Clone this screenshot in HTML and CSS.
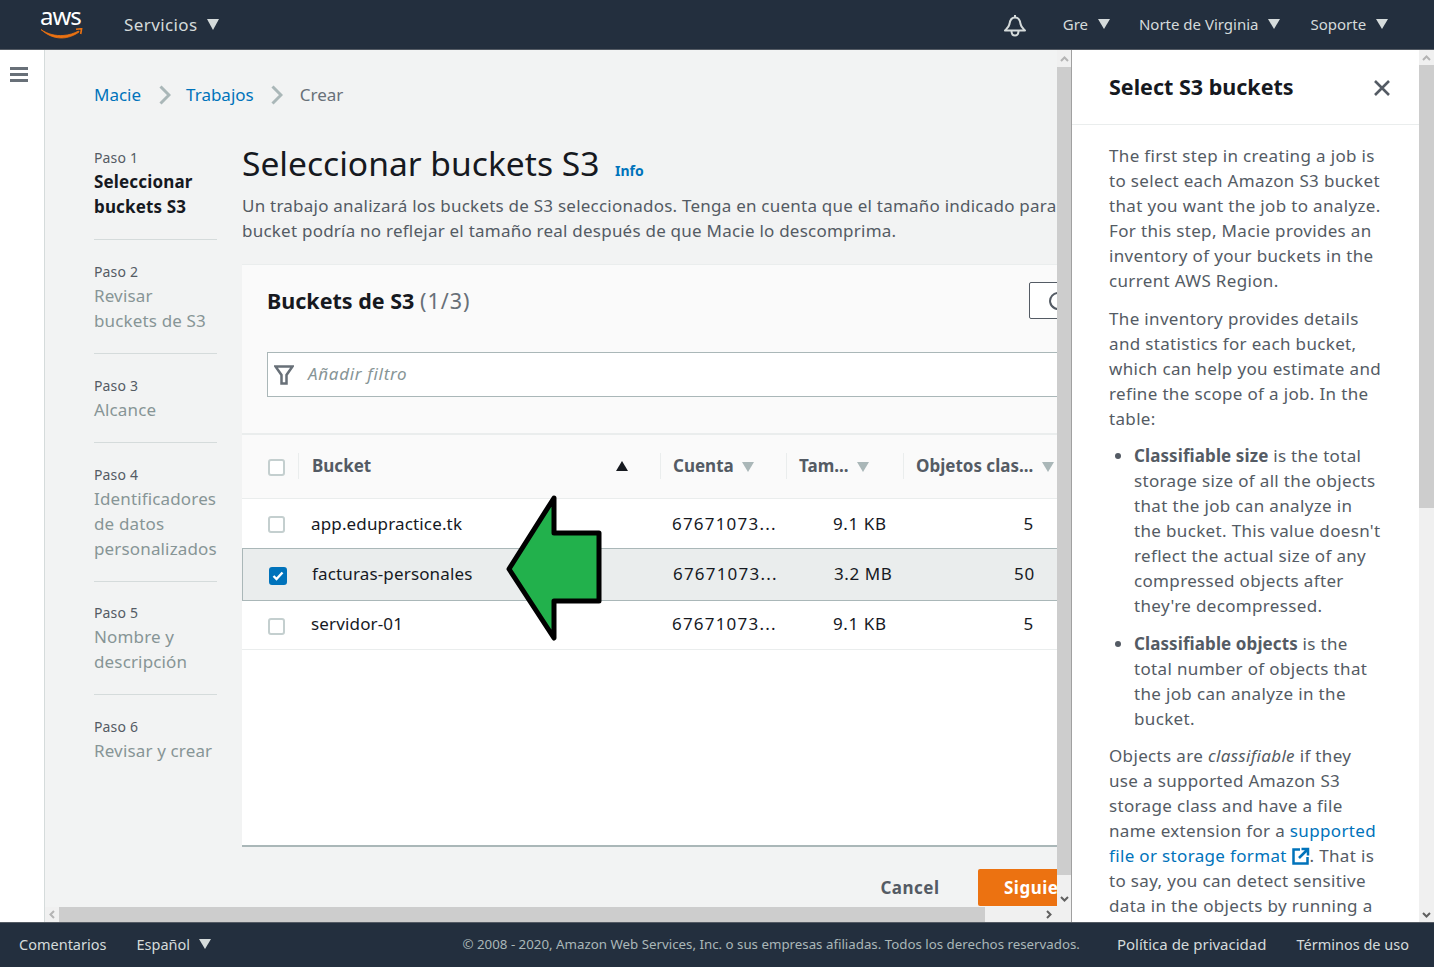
FILE: index.html
```html
<!DOCTYPE html>
<html lang="es">
<head>
  <meta charset="utf-8">
  <title>Macie - Crear trabajo</title>
  <link rel="stylesheet" href="styles.css">
</head>
<body>
  <header class="topbar">
    <div class="aws-logo">
      <span class="aws-word">aws</span>
      <svg width="44" height="11" viewBox="0 0 44 11">
        <path d="M1 1.500C8 6.500 16 8 23 7.500c6-.4 11-2 15.500-4.500l.6 1C34 7.500 28 10 21.500 10 13.500 10 6.500 6.500 1 1.500z" fill="#ec7211" stroke="#ec7211" stroke-width=".8"/>
        <path d="M36 1.300l5.600-.6-.9 5.300" fill="none" stroke="#ec7211" stroke-width="1.600"/>
      </svg>
    </div>
    <span class="nav-services">Servicios <i class="caret caret-big"></i></span>
    <div class="topbar-right">
      <svg class="bell" width="22" height="22" viewBox="0 0 22 22" fill="none" stroke="#d5dbdb" stroke-width="2">
        <path d="M11 0v2"/>
        <path d="M1 15.500h20c-2-2-4-3.500-4.500-6.500C16 5 14.500 2.500 11 2.500S6 5 5.500 9C5 12 3 13.500 1 15.500z" stroke-linejoin="round"/>
        <path d="M7.500 16c0 6 7 6 7 0"/>
      </svg>
      <span class="nav-item nav-gre">Gre <i class="caret"></i></span>
      <span class="nav-item nav-region">Norte de Virginia <i class="caret"></i></span>
      <span class="nav-item nav-support">Soporte <i class="caret"></i></span>
    </div>
  </header>

  <div class="workspace">
    <aside class="side-rail">
      <div class="burger"><span></span><span></span><span></span></div>
    </aside>

    <div class="main-wrap">
      <div class="main-row">
        <main class="content">
          <nav class="crumbs">
            <a>Macie</a>
            <svg class="crumb-sep" width="12" height="20" viewBox="0 0 12 20"><path d="M1.500 1.500l8.500 8.500-8.500 8.500" fill="none" stroke="#aab7b8" stroke-width="3"/></svg>
            <a>Trabajos</a>
            <svg class="crumb-sep crumb-sep-last" width="12" height="20" viewBox="0 0 12 20"><path d="M1.500 1.500l8.500 8.500-8.500 8.500" fill="none" stroke="#aab7b8" stroke-width="3"/></svg>
            <span class="crumb-current">Crear</span>
          </nav>

          <div class="wizard">
            <ol class="steps">
              <li class="step step-active"><small>Paso 1</small><span>Seleccionar buckets S3</span></li>
              <li class="step"><small>Paso 2</small><span>Revisar<br>buckets de S3</span></li>
              <li class="step"><small>Paso 3</small><span>Alcance</span></li>
              <li class="step step-tight"><small>Paso 4</small><span>Identificadores de datos personalizados</span></li>
              <li class="step"><small>Paso 5</small><span>Nombre y<br>descripción</span></li>
              <li class="step"><small>Paso 6</small><span>Revisar y crear</span></li>
            </ol>

            <section class="wizard-body">
              <h1 class="page-title">Seleccionar buckets S3 <a class="info">Info</a></h1>
              <p class="page-desc">Un trabajo analizará los buckets de S3 seleccionados. Tenga en cuenta que el tamaño indicado para un<br>bucket podría no reflejar el tamaño real después de que Macie lo descomprima.</p>

              <div class="card">
                <div class="card-head">
                  <div class="card-title-row">
                    <h2>Buckets de S3 <span class="count">(1/3)</span></h2>
                    <button class="refresh"><svg width="20" height="20" viewBox="0 0 20 20"><path d="M17 6a8 8 0 1 0 1 5" fill="none" stroke="#545b64" stroke-width="2"/></svg></button>
                  </div>
                  <div class="filter">
                    <svg width="20" height="20" viewBox="0 0 20 20"><path d="M1.500 1.500h17l-6 8.500v8.500h-5V10z" fill="none" stroke="#687078" stroke-width="2.500"/></svg>
                    <em>Añadir filtro</em>
                  </div>
                </div>

                <div class="table-row table-head">
                  <div class="col-check"><i class="check"></i></div>
                  <div class="col-name th">Bucket <i class="sort-up"></i></div>
                  <div class="col-account th">Cuenta <i class="sort-down"></i></div>
                  <div class="col-size th">Tam... <i class="sort-down"></i></div>
                  <div class="col-objects th">Objetos clas... <i class="sort-down"></i></div>
                </div>
                <div class="table-row">
                  <div class="col-check"><i class="check"></i></div>
                  <div class="col-name">app.edupractice.tk</div>
                  <div class="col-account">67671073...</div>
                  <div class="col-size">9.1 KB</div>
                  <div class="col-objects num">5</div>
                </div>
                <div class="table-row row-selected">
                  <div class="col-check">
                    <i class="check check-on"><svg width="12" height="10" viewBox="0 0 12 10"><path d="M1.500 5l3 3 6-6.500" fill="none" stroke="#fff" stroke-width="2.400"/></svg></i>
                  </div>
                  <div class="col-name">facturas-personales</div>
                  <div class="col-account">67671073...</div>
                  <div class="col-size">3.2 MB</div>
                  <div class="col-objects num">50</div>
                </div>
                <div class="table-row row-last">
                  <div class="col-check"><i class="check"></i></div>
                  <div class="col-name">servidor-01</div>
                  <div class="col-account">67671073...</div>
                  <div class="col-size">9.1 KB</div>
                  <div class="col-objects num">5</div>
                </div>
                <div class="table-empty"></div>
              </div>

              <div class="actions">
                <button class="btn-cancel">Cancel</button>
                <button class="btn-next">Siguiente</button>
              </div>
            </section>
          </div>

          <svg class="big-arrow" width="98" height="150" viewBox="0 0 98 150">
            <path d="M49 4L4 75l45 69v-37h45V39H49z" fill="#22b14c" stroke="#000" stroke-width="5" stroke-linejoin="round"/>
          </svg>
        </main>

        <div class="scroll-v scroll-main">
          <span class="scroll-btn"><svg width="9" height="6" viewBox="0 0 9 6"><path d="M1 5l3.500-3.500L8 5" fill="none" stroke="#b4b4b4" stroke-width="2"/></svg></span>
          <span class="scroll-thumb"></span>
          <span class="scroll-btn scroll-btn-down"><svg width="9" height="6" viewBox="0 0 9 6"><path d="M1 1l3.500 3.500L8 1" fill="none" stroke="#606060" stroke-width="2"/></svg></span>
        </div>
      </div>

      <div class="scroll-h">
        <span class="scroll-h-btn"><svg width="6" height="9" viewBox="0 0 6 9"><path d="M5 1L1.500 4.500 5 8" fill="none" stroke="#b4b4b4" stroke-width="2"/></svg></span>
        <span class="scroll-h-thumb"></span>
        <span class="scroll-h-btn scroll-h-end"><svg width="6" height="9" viewBox="0 0 6 9"><path d="M1 1l3.500 3.500L1 8" fill="none" stroke="#606060" stroke-width="2"/></svg></span>
      </div>
    </div>

    <aside class="help">
      <div class="help-head">
        <h2>Select S3 buckets</h2>
        <svg width="18" height="18" viewBox="0 0 18 18"><path d="M2 2l14 14M16 2L2 16" fill="none" stroke="#545b64" stroke-width="2.600"/></svg>
      </div>
      <div class="help-body">
        <p>The first step in creating a job is to select each Amazon S3 bucket that you want the job to analyze. For this step, Macie provides an inventory of your buckets in the current AWS Region.</p>
        <p>The inventory provides details and statistics for each bucket, which can help you estimate and refine the scope of a job. In the table:</p>
        <ul>
          <li><b>Classifiable size</b> is the total storage size of all the objects that the job can analyze in the bucket. This value doesn't reflect the actual size of any compressed objects after they're decompressed.</li>
          <li><b>Classifiable objects</b> is the total number of objects that the job can analyze in the bucket.</li>
        </ul>
        <p>Objects are <em>classifiable</em> if they use a supported Amazon S3 storage class and have a file name extension for a <a>supported file or storage format <svg class="ext" width="18" height="18" viewBox="0 0 18 18"><path d="M8 2.500H1.500v14h14V10" fill="none" stroke="#0073bb" stroke-width="2.500"/><path d="M7 11l8-8M9.500 2h6.500v6.500" fill="none" stroke="#0073bb" stroke-width="2.500"/></svg></a>. That is to say, you can detect sensitive data in the objects by running a classification job.</p>
      </div>
    </aside>

    <div class="scroll-v scroll-help">
      <span class="scroll-btn"><svg width="9" height="6" viewBox="0 0 9 6"><path d="M1 5l3.500-3.500L8 5" fill="none" stroke="#b4b4b4" stroke-width="2"/></svg></span>
      <span class="scroll-thumb"></span>
      <span class="scroll-btn scroll-btn-down"><svg width="9" height="6" viewBox="0 0 9 6"><path d="M1 1l3.500 3.500L8 1" fill="none" stroke="#606060" stroke-width="2"/></svg></span>
    </div>
  </div>

  <footer class="bottombar">
    <span class="foot-link foot-comments">Comentarios</span>
    <span class="foot-link foot-lang">Español <i class="caret"></i></span>
    <span class="copyright">© 2008 - 2020, Amazon Web Services, Inc. o sus empresas afiliadas. Todos los derechos reservados.</span>
    <span class="foot-link foot-strong">Política de privacidad</span>
    <span class="foot-link foot-terms">Términos de uso</span>
  </footer>
</body>
</html>
```

FILE: styles.css
```css
* {
  box-sizing: border-box;
}

html,
body {
  height: 100%;
}

body {
  margin: 0;
  display: flex;
  flex-direction: column;
  height: 967px;
  overflow: hidden;
  font-family: "Noto Sans", "Open Sans", sans-serif;
  font-size: 17px;
  line-height: 25px;
  color: #545b64;
  background-color: #fff;
}

h1,
h2,
p,
ol,
ul {
  margin: 0;
  padding: 0;
}

a {
  color: #0073bb;
}

/* top bar */
.topbar {
  flex: 0 0 50px;
  display: flex;
  align-items: center;
  padding-left: 39px;
  background-color: #232f3e;
  border-bottom: 1px solid #545b64;
  color: #d5dbdb;
}

.aws-logo {
  display: flex;
  flex-direction: column;
  align-self: flex-start;
  width: 46px;
  margin-top: 4px;
}

.aws-logo svg {
  display: block;
  margin-left: 1px;
}

.aws-word {
  padding-left: 1px;
  font-size: 24px;
  line-height: 24px;
  letter-spacing: -1px;
  color: #fff;
}

.nav-services {
  margin-left: 39px;
  font-size: 17px;
  letter-spacing: .4px;
}

.caret {
  display: inline-block;
  width: 0;
  height: 0;
  margin-left: 6px;
  vertical-align: 1px;
  border-left: 6.500px solid transparent;
  border-right: 6.500px solid transparent;
  border-top: 10px solid #d5dbdb;
}

.caret-big {
  margin-left: 5px;
  border-top-width: 11px;
}

.topbar-right {
  margin-left: auto;
  display: flex;
  align-items: center;
}

.bell {
  margin-right: 37px;
  margin-top: 3px;
}

.nav-item {
  font-size: 15px;
}

.nav-gre {
  margin-right: 29px;
}

.nav-region {
  margin-right: 30px;
}

.nav-support {
  margin-right: 46px;
}

/* page body */
.workspace {
  flex: 1;
  display: flex;
  min-height: 0;
}

.side-rail {
  flex: 0 0 45px;
  padding: 17px 0 0 10px;
  border-right: 1px solid #d5dbdb;
}

.burger span {
  display: block;
  width: 18px;
  height: 3px;
  margin-bottom: 3px;
  background-color: #687078;
}

.main-wrap {
  flex: 0 0 1027px;
  display: flex;
  flex-direction: column;
  min-width: 0;
}

.main-row {
  flex: 1;
  display: flex;
  min-height: 0;
}

.content {
  position: relative;
  flex: 1;
  overflow: hidden;
  padding: 32px 0 0 49px;
  background-color: #f2f3f3;
}

.crumbs {
  display: flex;
  align-items: center;
  height: 25px;
  white-space: nowrap;
}

.crumb-sep {
  margin: 0 15px 0 18px;
}

.crumb-sep-last {
  margin-right: 17px;
  margin-left: 17px;
}

.crumb-current {
  color: #687078;
}

.wizard {
  display: flex;
  margin-top: 39px;
  width: 1100px;
}

.steps {
  flex: 0 0 123px;
  margin-right: 25px;
  list-style: none;
  letter-spacing: .15px;
}

.steps .step {
  padding-bottom: 20px;
  margin-bottom: 20px;
  border-bottom: 1px solid #d5dbdb;
  color: #879596;
}

.steps .step-tight {
  margin-bottom: 19px;
}

.steps .step:last-child {
  border-bottom: 0;
}

.step small {
  display: block;
  font-size: 14px;
  line-height: 23px;
  color: #545b64;
}

.step span {
  display: block;
}

.step-active span {
  font-weight: 700;
  color: #16191f;
}

.page-title {
  font-size: 33.600px;
  line-height: 34px;
  font-weight: 400;
  color: #16191f;
  white-space: nowrap;
}

.info {
  font-size: 14px;
  font-weight: 700;
  margin-left: 7px;
}

.page-desc {
  margin-top: 5px;
  white-space: nowrap;
  letter-spacing: .23px;
}

.card {
  margin-top: 21px;
  width: 900px;
  background-color: #fafafa;
  border-top: 1px solid #eaeded;
}

.card-head {
  padding: 16px 25px 36px;
  border-bottom: 2px solid #eaeded;
}

.card-title-row {
  display: flex;
  align-items: center;
  justify-content: space-between;
  height: 38px;
}

.card-title-row h2 {
  font-size: 21.500px;
  font-weight: 700;
  color: #16191f;
}

.count {
  font-weight: 400;
  letter-spacing: 1px;
  color: #687078;
}

.refresh {
  margin-left: auto;
  margin-right: 28px;
  width: 60px;
  height: 37px;
  padding: 4px 0 0 18px;
  text-align: left;
  background-color: #fff;
  border: 1px solid #545b64;
  border-radius: 2px;
}

.filter {
  display: flex;
  align-items: center;
  gap: 14px;
  height: 45px;
  margin-top: 33px;
  margin-right: -25px;
  padding-left: 6px;
  background-color: #fff;
  border: 1px solid #aab7b8;
}

.filter em {
  margin-top: -2px;
  letter-spacing: .7px;
  color: #879596;
}

.table-row {
  display: flex;
  align-items: center;
  height: 50px;
  padding-bottom: 1px;
  background-color: #fff;
  border-bottom: 1px solid #eaeded;
  color: #16191f;
  letter-spacing: .15px;
}

.table-head {
  height: 64px;
  padding-bottom: 0;
  background-color: #fafafa;
  letter-spacing: 0;
}

.row-selected {
  height: 53px;
  margin-top: -1px;
  background-color: #eaeded;
  border-top: 1px solid #aab7b8;
  border-bottom: 1px solid #aab7b8;
  border-left: 1px solid #aab7b8;
}

.row-last {
  height: 49px;
}

.row-selected > div:not(.col-check),
.row-last > div:not(.col-check) {
  margin-bottom: 2px;
}

.col-check {
  flex: 0 0 56px;
  padding-left: 26px;
  display: flex;
}

.col-name {
  flex: 0 0 362px;
  padding-left: 13px;
  position: relative;
}

.col-account {
  flex: 0 0 126px;
  padding-left: 12px;
  white-space: nowrap;
  letter-spacing: 1.200px;
}

.col-size {
  flex: 0 0 117px;
  padding-left: 47px;
  white-space: nowrap;
  letter-spacing: .6px;
}

.col-objects {
  flex: 0 0 155px;
  padding-left: 12px;
  white-space: nowrap;
}

.num {
  padding-right: 24px;
  text-align: right;
  letter-spacing: .8px;
}

.th {
  margin-bottom: 1px;
  font-weight: 700;
  color: #545b64;
  height: 26px;
  line-height: 26px;
  letter-spacing: 0;
  border-left: 1px solid #eaeded;
  position: relative;
}

.table-head .col-size {
  padding-left: 12px;
}

.check {
  display: block;
  flex: none;
  width: 17px;
  height: 17px;
  margin-top: 3px;
  background-color: #fff;
  border: 2px solid #c4cfcf;
  border-radius: 3px;
}

.table-head .check {
  margin-top: 1px;
}

.check-on {
  display: flex;
  align-items: center;
  justify-content: center;
  width: 18px;
  height: 18px;
  background-color: #0073bb;
  border-color: #0073bb;
}

.sort-up {
  position: absolute;
  top: 8px;
  right: 32px;
  border-left: 6.500px solid transparent;
  border-right: 6.500px solid transparent;
  border-bottom: 10px solid #16191f;
}

.sort-down {
  display: inline-block;
  margin-left: 4px;
  border-left: 6.500px solid transparent;
  border-right: 6.500px solid transparent;
  border-top: 10px solid #aab7b8;
}

.table-empty {
  height: 197px;
  background-color: #fff;
  border-bottom: 2px solid #aab7b8;
}

.actions {
  display: flex;
  align-items: center;
  margin-top: 22px;
  width: 900px;
  padding-left: 638px;
}

.btn-cancel {
  width: 60px;
  padding: 0;
  font: 700 17px "Noto Sans", sans-serif;
  letter-spacing: .5px;
  color: #545b64;
  background: none;
  border: 0;
}

.btn-next {
  margin-left: 38px;
  width: 130px;
  height: 37px;
  padding: 0 0 0 26px;
  text-align: left;
  font: 700 17px "Noto Sans", sans-serif;
  letter-spacing: .5px;
  color: #fff;
  background-color: #ec7211;
  border: 0;
  border-radius: 2px;
}

.big-arrow {
  position: absolute;
  left: 460px;
  top: 444px;
}

/* scrollbars */
.scroll-v {
  display: flex;
  flex-direction: column;
  background-color: #f0f0f0;
}

.scroll-main {
  flex: 0 0 15px;
  border-right: 1px solid #a0a0a0;
}

.scroll-help {
  flex: 0 0 15px;
}

.scroll-btn {
  flex: none;
  display: flex;
  align-items: center;
  justify-content: center;
  height: 17px;
}

.scroll-help .scroll-btn {
  height: 15px;
}

.scroll-btn-down {
  margin-top: auto;
}

.scroll-thumb {
  flex: none;
  background-color: #cdcdcd;
}

.scroll-main .scroll-thumb {
  height: 808px;
}

.scroll-help .scroll-thumb {
  height: 443px;
}

.scroll-h {
  flex: 0 0 15px;
  display: flex;
  align-items: center;
  background-color: #f0f0f0;
  border-right: 1px solid #a0a0a0;
}

.scroll-h-btn {
  flex: 0 0 14px;
  display: flex;
  align-items: center;
  justify-content: center;
}

.scroll-h-thumb {
  flex: 0 0 926px;
  height: 15px;
  background-color: #cdcdcd;
}

.scroll-h-end {
  margin-left: auto;
  margin-right: 15px;
}

/* help panel */
.help {
  flex: 0 0 347px;
  overflow: hidden;
  background-color: #fff;
}

.help-head {
  display: flex;
  align-items: center;
  justify-content: space-between;
  height: 75px;
  padding: 0 28px 0 37px;
  border-bottom: 1px solid #eaeded;
}

.help-head h2 {
  margin-top: -2px;
  font-size: 21.500px;
  font-weight: 700;
  color: #16191f;
}

.help-head svg {
  margin-top: 1px;
}

.help-body {
  padding: 18px 37px 0;
  letter-spacing: .34px;
}

.help-body p {
  margin-bottom: 13px;
}

.help-body ul {
  margin-top: -1px;
  margin-bottom: 12px;
  padding-left: 25px;
}

.help-body li {
  margin-bottom: 13px;
}

.help-body li:last-child {
  margin-bottom: 0;
}

.help-body b {
  letter-spacing: .1px;
  color: #545b64;
}

.ext {
  vertical-align: -3px;
}

/* footer */
.bottombar {
  flex: 0 0 45px;
  display: flex;
  align-items: center;
  padding: 0 25px 2px 19px;
  background-color: #232f3e;
  border-top: 1px solid #545b64;
  font-size: 14.500px;
  color: #d5dbdb;
  white-space: nowrap;
}

.foot-comments {
  margin-right: 30px;
}

.foot-lang .caret {
  margin-left: 5px;
}

.copyright {
  margin-left: auto;
  margin-right: 37px;
  font-size: 13.300px;
  color: #aab7b8;
}

.foot-strong {
  font-size: 15px;
}

.foot-terms {
  margin-left: 30px;
}
```
